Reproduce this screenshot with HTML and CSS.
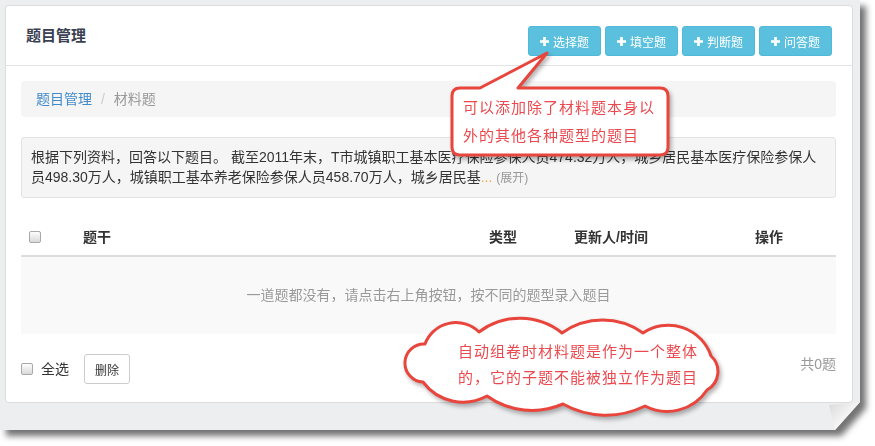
FILE: index.html
```html
<!DOCTYPE html>
<html lang="zh-CN">
<head>
    <meta charset="UTF-8">
    <meta name="viewport" content="width=device-width, initial-scale=1.0">
    <title>题目管理</title>
    <link rel="stylesheet" href="styles.css">
</head>
<body>

<div class="shot">
    <div class="paper">
        <div class="frame">
            <div class="panel">
                <!-- 标题栏 -->
                <div class="panel-heading">
                    <h3 class="panel-title">题目管理</h3>
                    <div class="btn-group">
                        <button class="btn btn-info"><svg class="icon-plus" viewBox="0 0 10 10"><path d="M3.5 0h3v3.5H10v3H6.5V10h-3V6.5H0v-3h3.5z"/></svg>选择题</button>
                        <button class="btn btn-info"><svg class="icon-plus" viewBox="0 0 10 10"><path d="M3.5 0h3v3.5H10v3H6.5V10h-3V6.5H0v-3h3.5z"/></svg>填空题</button>
                        <button class="btn btn-info"><svg class="icon-plus" viewBox="0 0 10 10"><path d="M3.5 0h3v3.5H10v3H6.5V10h-3V6.5H0v-3h3.5z"/></svg>判断题</button>
                        <button class="btn btn-info"><svg class="icon-plus" viewBox="0 0 10 10"><path d="M3.5 0h3v3.5H10v3H6.5V10h-3V6.5H0v-3h3.5z"/></svg>问答题</button>
                    </div>
                </div>

                <div class="panel-body">
                    <ol class="breadcrumb">
                        <li><a href="#">题目管理</a></li>
                        <li class="active">材料题</li>
                    </ol>

                    <!-- 材料内容 -->
                    <div class="well">根据下列资料，回答以下题目。 截至2011年末，T市城镇职工基本医疗保险参保人员474.32万人，城乡居民基本医疗保险参保人员498.30万人，城镇职工基本养老保险参保人员458.70万人，城乡居民基<span class="ellipsis">...</span> <a href="#" class="more">(展开)</a></div>

                    <table class="table">
                        <colgroup>
                            <col class="col-check">
                            <col class="col-title">
                            <col class="col-type">
                            <col class="col-update">
                            <col class="col-action">
                        </colgroup>
                        <thead>
                            <tr>
                                <th><input type="checkbox" class="check"></th>
                                <th>题干</th>
                                <th>类型</th>
                                <th>更新人/时间</th>
                                <th>操作</th>
                            </tr>
                        </thead>
                        <tbody>
                            <tr>
                                <td colspan="5" class="empty">一道题都没有，请点击右上角按钮，按不同的题型录入题目</td>
                            </tr>
                        </tbody>
                    </table>

                    <div class="table-footer">
                        <label class="check-all"><input type="checkbox" class="check">全选</label>
                        <button class="btn btn-default btn-sm">删除</button>
                        <span class="total">共0题</span>
                    </div>
                </div>
            </div>
        </div>
        <div class="curl"></div>
    </div>

    <!-- 标注 -->
    <div class="note note-bubble">
        <svg width="240" height="125" viewBox="0 0 240 125">
            <path d="M20 43 L40 43 L107 8 L78 43 L220 43 Q228 43 228 51 L228 102 Q228 110 220 110 L20 110 Q12 110 12 102 L12 51 Q12 43 20 43 Z"/>
        </svg>
        <p class="note-text">可以添加除了材料题本身以<br>外的其他各种题型的题目</p>
    </div>

    <div class="note note-cloud">
        <svg width="335" height="115" viewBox="0 0 335 115">
            <path d="M28 70 A19 19 0 0 1 30 32 A33 33 0 0 1 84 20 A68 68 0 0 1 167 21 A70 70 0 0 1 248 21 A45 45 0 0 1 316 44 A21 21 0 0 1 312 78 A48 48 0 0 1 250 94 A88 88 0 0 1 168 92 A78 78 0 0 1 92 84 A50 50 0 0 1 28 70 Z"/>
        </svg>
        <p class="note-text">自动组卷时材料题是作为一个整体<br>的，它的子题不能被独立作为题目</p>
    </div>
</div>

</body>
</html>
```

FILE: styles.css
```css
body {
    margin: 0;
    background-color: #fff;
    font-family: "Liberation Sans", "Noto Sans CJK SC", sans-serif;
    font-size: 14px;
    color: #333;
}

.shot {
    position: relative;
    width: 875px;
    height: 446px;
}

.paper {
    position: relative;
    width: 860px;
    height: 430px;
    filter: drop-shadow(6px 6px 3px rgba(0, 0, 0, 0.55));
}

.frame {
    width: 860px;
    height: 430px;
    box-sizing: border-box;
    padding: 5px 0 0 5px;
    background-color: #edeef0;
    clip-path: polygon(0 0, 100% 0, 100% 402px, 835px 100%, 0 100%);
}

.curl {
    position: absolute;
    left: 829px;
    top: 402px;
    width: 31px;
    height: 28px;
    background: linear-gradient(135deg, #d8d8d8 0%, #f6f6f6 55%, #ffffff 100%);
    clip-path: polygon(0 3px, 100% 0, 6px 100%);
}

.panel {
    width: 848px;
    box-sizing: border-box;
    background-color: #fff;
    border: 1px solid #dcdcdc;
    border-radius: 4px;
}

.panel-heading {
    display: flex;
    justify-content: space-between;
    align-items: flex-start;
    height: 60px;
    padding: 20px 20px 0;
    box-sizing: border-box;
    border-bottom: 1px solid #e3e3e3;
}

.panel-title {
    margin: 0;
    font-size: 15px;
    line-height: 20px;
    font-weight: bold;
    color: #3a3f51;
}

.btn-group {
    display: flex;
    gap: 4px;
}

.btn {
    display: inline-flex;
    align-items: center;
    gap: 4px;
    height: 30px;
    padding: 0 11px;
    box-sizing: border-box;
    font-family: inherit;
    font-size: 12px;
    border: 1px solid transparent;
    border-radius: 3px;
    cursor: pointer;
}

.btn-info {
    background-color: #5bc0de;
    border-color: #4fb9d9;
    color: #fff;
}

.icon-plus {
    width: 9px;
    height: 9px;
    fill: #fff;
}

.btn-default {
    background-color: #fff;
    border-color: #ccc;
    color: #333;
}

.btn-sm {
    padding: 0 10px;
}

.panel-body {
    padding: 15px 16px 18px 15px;
}

.breadcrumb {
    margin: 0 0 20px;
    padding: 8px 15px;
    list-style: none;
    line-height: 20px;
    background-color: #f5f5f5;
    border-radius: 4px;
}

.breadcrumb li {
    display: inline-block;
}

.breadcrumb li + li::before {
    content: "/\00a0";
    padding: 0 5px;
    color: #ccc;
}

.breadcrumb a {
    color: #428bca;
    text-decoration: none;
}

.breadcrumb .active {
    color: #999;
}

.well {
    margin-bottom: 21px;
    padding: 9px;
    line-height: 20px;
    background-color: #f5f5f5;
    border: 1px solid #e3e3e3;
    border-radius: 3px;
}

.ellipsis {
    color: #f0ad4e;
}

.more {
    font-size: 12px;
    color: #999;
    text-decoration: none;
}

.table {
    width: 100%;
    table-layout: fixed;
    border-collapse: collapse;
}

.col-check { width: 54px; }
.col-title { width: 406px; }
.col-type { width: 85px; }
.col-update { width: 181px; }
.col-action { width: 89px; }

.table th {
    padding: 8px;
    line-height: 20px;
    text-align: left;
    font-weight: bold;
    border-bottom: 2px solid #ddd;
}

.table td.empty {
    padding: 28px 8px 29px;
    line-height: 20px;
    text-align: center;
    color: #999;
    background-color: #f9f9f9;
}

.check {
    appearance: none;
    display: block;
    width: 12px;
    height: 12px;
    margin: 0;
    border: 1px solid #a9a9a9;
    border-radius: 2px;
    background: linear-gradient(#fdfdfd, #d9d9d9);
}

.table-footer {
    display: flex;
    align-items: center;
    margin-top: 20px;
}

.check-all {
    display: flex;
    align-items: center;
    gap: 8px;
    line-height: 20px;
}

.table-footer .btn {
    margin-left: 15px;
}

.total {
    align-self: flex-start;
    margin-left: auto;
    line-height: 20px;
    color: #999;
}

.note {
    position: absolute;
}

.note svg {
    position: absolute;
    left: 0;
    top: 0;
    overflow: visible;
    filter: drop-shadow(2px 3px 2px rgba(0, 0, 0, 0.3));
}

.note path {
    fill: #fff;
    stroke: #e8453c;
    stroke-width: 3;
    stroke-linejoin: round;
}

.note-text {
    position: absolute;
    margin: 0;
    white-space: nowrap;
    font-size: 15px;
    letter-spacing: 1px;
    color: #ea4a4f;
}

.note-bubble {
    left: 440px;
    top: 45px;
    width: 240px;
    height: 125px;
}

.note-bubble .note-text {
    left: 23px;
    top: 49px;
    line-height: 28px;
}

.note-cloud {
    left: 395px;
    top: 312px;
    width: 335px;
    height: 115px;
}

.note-cloud .note-text {
    left: 63px;
    top: 27px;
    line-height: 26px;
}
```
